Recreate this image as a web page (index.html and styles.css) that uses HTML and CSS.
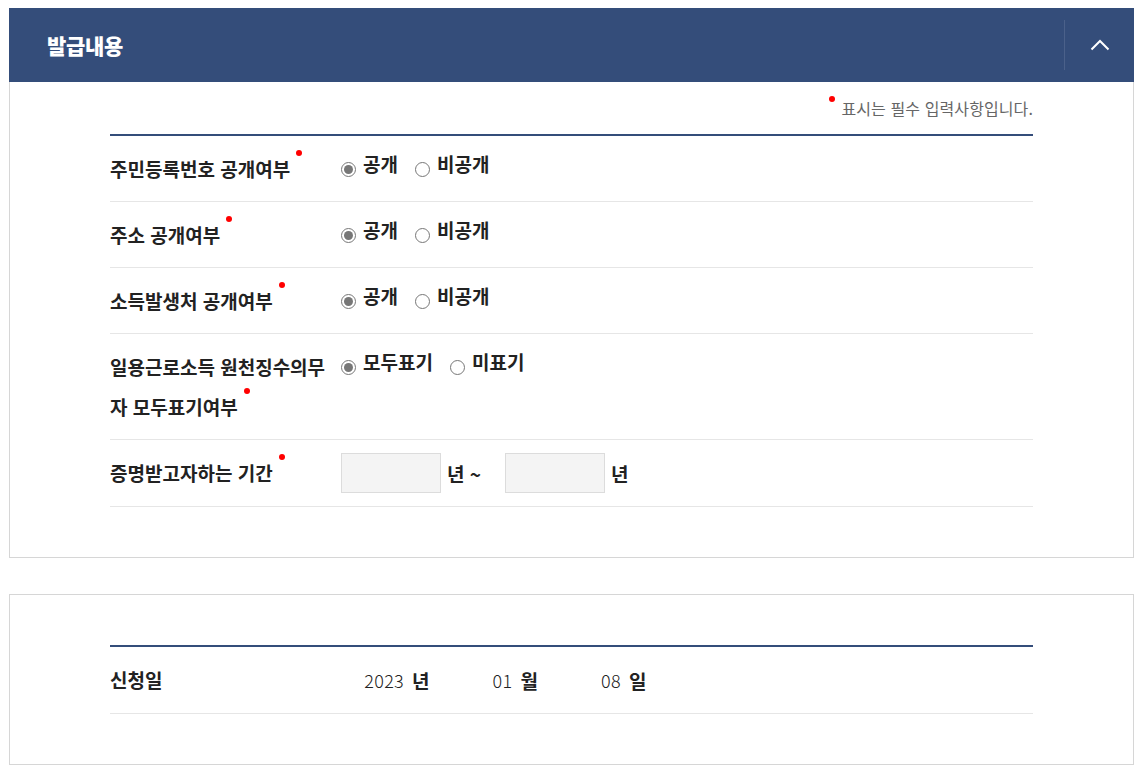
FILE: index.html
```html
<!DOCTYPE html>
<html lang="ko">
<head>
<meta charset="utf-8">
<title>발급내용</title>
<link rel="stylesheet" href="styles.css">
</head>
<body>
<section class="panel">
  <header class="panel-head">
    <h2 class="panel-title">발급내용</h2>
    <button class="toggle" type="button" aria-label="접기">
      <svg width="20" height="12" viewBox="0 0 20 12"><polyline points="1.5,10.5 10,2 18.5,10.5" fill="none" stroke="#fff" stroke-width="2"/></svg>
    </button>
  </header>
  <div class="panel-body">
    <p class="notice">표시는 필수 입력사항입니다.</p>
    <div class="form">
      <div class="row">
        <div class="label"><span class="req">주민등록번호 공개여부</span></div>
        <div class="value">
          <label class="radio"><span class="dot checked"></span><span class="rtext">공개</span></label>
          <label class="radio"><span class="dot"></span><span class="rtext">비공개</span></label>
        </div>
      </div>
      <div class="row">
        <div class="label"><span class="req">주소 공개여부</span></div>
        <div class="value">
          <label class="radio"><span class="dot checked"></span><span class="rtext">공개</span></label>
          <label class="radio"><span class="dot"></span><span class="rtext">비공개</span></label>
        </div>
      </div>
      <div class="row">
        <div class="label"><span class="req">소득발생처 공개여부</span></div>
        <div class="value">
          <label class="radio"><span class="dot checked"></span><span class="rtext">공개</span></label>
          <label class="radio"><span class="dot"></span><span class="rtext">비공개</span></label>
        </div>
      </div>
      <div class="row">
        <div class="label"><span class="req">일용근로소득 원천징수의무자 모두표기여부</span></div>
        <div class="value">
          <label class="radio"><span class="dot checked"></span><span class="rtext">모두표기</span></label>
          <label class="radio"><span class="dot"></span><span class="rtext">미표기</span></label>
        </div>
      </div>
      <div class="row row-period">
        <div class="label"><span class="req">증명받고자하는 기간</span></div>
        <div class="value period">
          <span class="box"></span><span class="unit">년 ~</span>
          <span class="box box2"></span><span class="unit">년</span>
        </div>
      </div>
    </div>
  </div>
</section>

<section class="panel panel-plain">
  <div class="panel-body">
    <div class="form">
      <div class="row row-date">
        <div class="label">신청일</div>
        <div class="value date">
          <span class="num n1">2023</span><span class="dunit">년</span>
          <span class="num n2">01</span><span class="dunit">월</span>
          <span class="num n3">08</span><span class="dunit">일</span>
        </div>
      </div>
    </div>
  </div>
</section>
</body>
</html>
```

FILE: styles.css
```css
* { box-sizing: border-box; }
body {
  margin: 8px 7px 8px 9px;
  font-family: "Noto Sans CJK KR", "Noto Sans", sans-serif;
  color: #222;
  background: #fff;
}
.panel { width: 1125px; }
.panel-head {
  height: 74px;
  background: #344d7a;
  display: flex;
  align-items: center;
  justify-content: space-between;
  padding-left: 38px;
}
.panel-title {
  margin: 0;
  font-size: 21px;
  font-weight: 900;
  color: #fff;
  letter-spacing: -0.3px;
}
.toggle {
  width: 70px;
  height: 50px;
  border: 0;
  border-left: 1px solid #4b618a;
  background: transparent;
  padding: 0;
  display: flex;
  align-items: center;
  justify-content: center;
}
.panel-body {
  border: 1px solid #d6d6d6;
  border-top: 0;
  padding: 14px 100px 50px;
}
.panel-plain { margin-top: 36px; }
.panel-plain .panel-body {
  border-top: 1px solid #d6d6d6;
  padding-top: 50px;
  padding-bottom: 50px;
}
.notice {
  margin: 0 0 14px;
  text-align: right;
  font-size: 16px;
  line-height: 24px;
  color: #666;
  letter-spacing: 0.1px;
}
.notice::before {
  content: "";
  display: inline-block;
  width: 6px;
  height: 6px;
  border-radius: 50%;
  background: #f00;
  vertical-align: top;
  margin: 0 6px 0 0;
}
.form { border-top: 2px solid #344d7a; }
.row {
  display: flex;
  border-bottom: 1px solid #e6e6e6;
  padding: 13px 0 12px;
}
.row-period { padding-bottom: 13px; }
.row-date { padding-bottom: 13px; }
.label {
  width: 225px;
  margin-right: 6px;
  flex: none;
  font-size: 19px;
  line-height: 40px;
  font-weight: 700;
}
.req::after {
  content: "";
  display: inline-block;
  width: 6px;
  height: 6px;
  border-radius: 50%;
  background: #f00;
  vertical-align: top;
  margin: 1px 0 0 6px;
}
.value {
  display: flex;
  align-items: center;
  height: 40px;
  font-size: 19px;
  font-weight: 700;
}
.radio {
  display: flex;
  align-items: center;
  margin-right: 17px;
}
.dot {
  width: 15px;
  height: 15px;
  border: 1px solid #777;
  border-radius: 50%;
  margin-right: 7px;
  display: flex;
  align-items: center;
  justify-content: center;
  background: #fff;
}
.dot.checked::after {
  content: "";
  width: 9px;
  height: 9px;
  border-radius: 50%;
  background: #777;
}
.rtext {
  line-height: 20px;
  margin-bottom: 10px;
}
.box {
  width: 100px;
  height: 40px;
  background: #f4f4f4;
  border: 1px solid #dcdcdc;
}
.box2 { margin-left: 24px; }
.unit { margin-left: 6px; }
.date { font-weight: 700; }
.num {
  font-weight: 300;
  font-size: 18px;
  text-align: right;
  width: 63px;
  letter-spacing: 0.3px;
}
.n2 { margin-left: 20px; }
.n3 { margin-left: 20px; }
.dunit { margin-left: 8px; }
```
